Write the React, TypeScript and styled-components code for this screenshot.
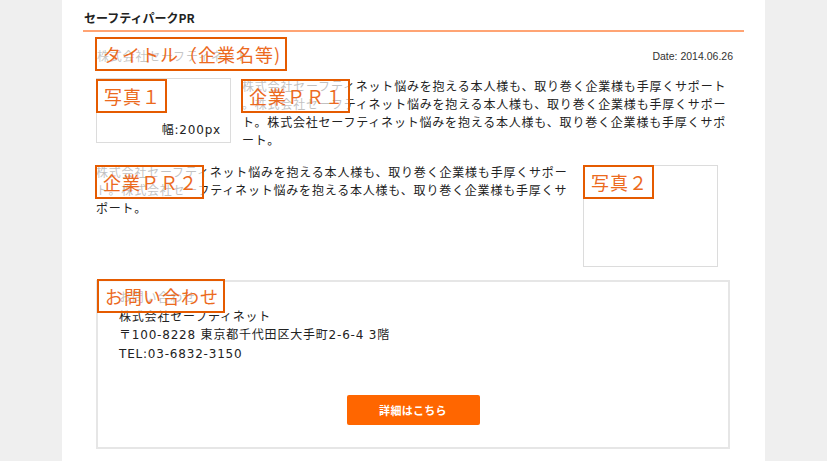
import React from 'react';
import styled, { createGlobalStyle } from 'styled-components';

const GlobalStyle = createGlobalStyle`
  html, body {
    margin: 0;
    padding: 0;
    background: #efefef;
  }
  body {
    font-family: "Noto Sans CJK JP", "Noto Sans", sans-serif;
    color: #222;
  }
`;

const Page = styled.div`
  width: 661px;
  min-height: 461px;
  margin: 0 auto;
  padding: 0 21px;
  background: #fff;
  box-sizing: content-box;
`;

const Heading = styled.h1`
  margin: 0;
  padding: 9px 0 3px 1px;
  font-size: 12px;
  line-height: 18px;
  font-weight: 700;
  color: #222;
  border-bottom: 2px solid #ffa474;
`;

const Content = styled.div`
  padding: 5px 14px 0 13px;
  font-family: "DejaVu Sans", "Noto Sans CJK JP", sans-serif;
  font-size: 12px;
  letter-spacing: 0.8px;
  line-height: 18px;
`;

const Section = styled.div`
  position: relative;
`;

// orange annotation tag laid over the part it names
const Label = styled.span<{ $top?: number }>`
  position: absolute;
  top: ${(p) => p.$top ?? 0}px;
  left: -1px;
  padding: 4px 4px 4px 6px;
  border: 2px solid #e55b00;
  background: rgba(255, 255, 255, 0.72);
  color: #ec6a1e;
  font-family: "Noto Sans CJK JP", sans-serif;
  font-size: 18px;
  line-height: 22px;
  letter-spacing: 1px;
  white-space: nowrap;
`;

const TitleRow = styled.div`
  display: flex;
  justify-content: space-between;
  align-items: flex-end;
  height: 34px;
  margin-right: -3px;
`;

const TitleText = styled(Section)`
  padding: 0 0 5px 1px;
  width: 190px;
  height: 29px;
  display: flex;
  align-items: flex-end;
  color: #333;
`;

const DateText = styled.div`
  font-family: "Liberation Sans", Arial, sans-serif;
  font-size: 10.5px;
  letter-spacing: 0;
  line-height: 14px;
  color: #333;
  margin-bottom: 8px;
`;

const Row = styled.div<{ $cols: string; $gap: number; $mt: number }>`
  display: grid;
  grid-template-columns: ${(p) => p.$cols};
  column-gap: ${(p) => p.$gap}px;
  align-items: start;
  margin-top: ${(p) => p.$mt}px;
`;

const Photo = styled(Section)<{ $h: number; $mt?: number }>`
  height: ${(p) => p.$h}px;
  margin-top: ${(p) => p.$mt ?? 0}px;
  border: 1px solid #dcdcdc;
  box-sizing: border-box;
  display: flex;
  align-items: flex-end;
  justify-content: flex-end;
`;

const PhotoNote = styled.span`
  padding: 0 9px 3px 0;
  color: #222;
`;

const Body = styled(Section)`
  line-break: anywhere;
  color: #222;
`;

const BodyText = styled.p`
  margin: 0;
`;

const Contact = styled(Section)`
  margin-top: 13px;
  border: 2px solid #e6e6e6;
  height: 169px;
  box-sizing: border-box;
  padding: 7px 21px 0;
  line-height: 18.5px;
  display: flex;
  flex-direction: column;
`;

const ContactLine = styled.div`
  color: #222;
  letter-spacing: 0.8px;
`;

const Button = styled.button`
  align-self: center;
  margin-top: 32px;
  width: 133px;
  height: 30px;
  border: none;
  border-radius: 2px;
  background: #ff6600;
  color: #fff;
  font-family: "Noto Sans CJK JP", sans-serif;
  font-size: 11px;
  font-weight: 700;
  letter-spacing: 0.3px;
  cursor: pointer;
`;

const pr = '株式会社セーフティネット悩みを抱える本人様も、取り巻く企業様も手厚くサポート。';

export default function App() {
  return (
    <>
      <GlobalStyle />
      <Page>
        <Heading>セーフティパークPR</Heading>
        <Content>
          <TitleRow>
            <TitleText>
              株式会社セーフティネット
              <Label>タイトル（企業名等)</Label>
            </TitleText>
            <DateText>Date: 2014.06.26</DateText>
          </TitleRow>

          <Row $cols="135px 1fr" $gap={11} $mt={7}>
            <Photo $h={65}>
              <Label>写真１</Label>
              <PhotoNote>幅:200px</PhotoNote>
            </Photo>
            <Body>
              <BodyText>{pr.repeat(3)}</BodyText>
              <Label $top={1}>企業ＰＲ１</Label>
            </Body>
          </Row>

          <Row $cols="480px 135px" $gap={7} $mt={14}>
            <Body>
              <BodyText>{pr.repeat(2)}</BodyText>
              <Label $top={1}>企業ＰＲ２</Label>
            </Body>
            <Photo $h={102} $mt={1}>
              <Label $top={-1}>写真２</Label>
            </Photo>
          </Row>

          <Contact>
            <ContactLine>お問い合わせ</ContactLine>
            <ContactLine>株式会社セーフティネット</ContactLine>
            <ContactLine>〒100-8228 東京都千代田区大手町2-6-4 3階</ContactLine>
            <ContactLine>TEL:03-6832-3150</ContactLine>
            <Button>詳細はこちら</Button>
            <Label $top={-3}>お問い合わせ</Label>
          </Contact>
        </Content>
      </Page>
    </>
  );
}
